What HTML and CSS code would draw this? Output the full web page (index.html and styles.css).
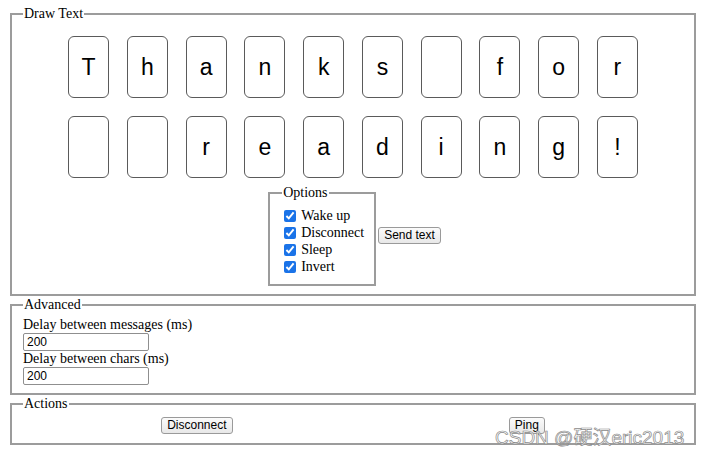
FILE: index.html
```html
<!DOCTYPE html>
<html lang="en">
<head>
    <meta charset="UTF-8">
    <meta name="viewport" content="width=device-width, initial-scale=1.0">
    <title>Draw Text</title>
    <link rel="stylesheet" href="styles.css">
</head>
<body>
    <fieldset class="panel">
        <legend>Draw Text</legend>
        <div class="cards">
            <div class="card">T</div>
            <div class="card">h</div>
            <div class="card">a</div>
            <div class="card">n</div>
            <div class="card">k</div>
            <div class="card">s</div>
            <div class="card"></div>
            <div class="card">f</div>
            <div class="card">o</div>
            <div class="card">r</div>
        </div>
        <div class="cards">
            <div class="card"></div>
            <div class="card"></div>
            <div class="card">r</div>
            <div class="card">e</div>
            <div class="card">a</div>
            <div class="card">d</div>
            <div class="card">i</div>
            <div class="card">n</div>
            <div class="card">g</div>
            <div class="card">!</div>
        </div>
        <div class="send-section">
            <fieldset class="options">
                <legend>Options</legend>
                <label class="option"><input type="checkbox" checked> Wake up</label>
                <label class="option"><input type="checkbox" checked> Disconnect</label>
                <label class="option"><input type="checkbox" checked> Sleep</label>
                <label class="option"><input type="checkbox" checked> Invert</label>
            </fieldset>
            <button class="btn">Send text</button>
        </div>
    </fieldset>

    <fieldset class="panel">
        <legend>Advanced</legend>
        <label class="field-label" for="msgDelay">Delay between messages (ms)</label>
        <input class="field" type="text" id="msgDelay" value="200">
        <label class="field-label" for="charDelay">Delay between chars (ms)</label>
        <input class="field" type="text" id="charDelay" value="200">
    </fieldset>

    <fieldset class="panel">
        <legend>Actions</legend>
        <div class="actions">
            <button class="btn">Disconnect</button>
            <button class="btn">Ping</button>
        </div>
    </fieldset>

    <div class="watermark">CSDN @硬汉eric2013</div>
</body>
</html>
```

FILE: styles.css
```css
* {
    box-sizing: border-box;
}

body {
    margin: 6px 7px 0 10px;
    font-family: 'Liberation Serif', 'Times New Roman', serif;
    font-size: 14px;
    color: #000;
    background: #fff;
}

fieldset {
    border: 2px solid #9c9c9c;
    margin: 0;
}

legend {
    padding: 0 1px;
    line-height: 16px;
}

.panel {
    padding: 0 11px 8px;
    margin-bottom: 1px;
}

.panel:last-of-type {
    padding-bottom: 9px;
}

.cards {
    display: flex;
    justify-content: center;
    gap: 17.75px;
    margin-top: 14px;
}

.cards + .cards {
    margin-top: 18px;
}

.card {
    width: 41px;
    height: 62px;
    border: 1.5px solid #5a5a5a;
    border-radius: 6px;
    display: flex;
    align-items: center;
    justify-content: center;
    padding-top: 1px;
    font-family: 'Liberation Sans', Arial, sans-serif;
    font-size: 23px;
}

.send-section {
    display: flex;
    justify-content: center;
    align-items: center;
    gap: 2px;
    margin-top: 7px;
    padding-left: 3px;
}

.options {
    padding: 6px 10px 9px 12px;
}

.option {
    display: flex;
    align-items: center;
    height: 17px;
    white-space: nowrap;
}

.option input {
    width: 12px;
    height: 12px;
    margin: 0 5px 0 2px;
    accent-color: #1a73e8;
}

.btn {
    font-family: 'Liberation Sans', Arial, sans-serif;
    font-size: 12px;
    line-height: 13px;
    padding: 1px 5px;
    color: #000;
    background: linear-gradient(#fbfbfb, #e8e8e8);
    border: 1px solid #9a9a9a;
    border-radius: 3px;
}

.field-label {
    display: block;
    line-height: 16px;
}

.panel legend + .field-label {
    margin-top: 4px;
}

.field {
    display: block;
    width: 126px;
    height: 18px;
    padding: 1px 3px;
    border: 1px solid #8f8f8f;
    border-radius: 2px;
    font-family: 'Liberation Sans', Arial, sans-serif;
    font-size: 12px;
}

.actions {
    display: flex;
    justify-content: space-around;
    margin-top: 5px;
}

.watermark {
    position: absolute;
    left: 495px;
    top: 428px;
    font-family: 'Liberation Sans', 'Noto Sans CJK SC', sans-serif;
    font-size: 19px;
    line-height: 20px;
    color: rgba(255, 255, 255, 0.75);
    -webkit-text-stroke: 0.7px #8a8a8a;
    white-space: nowrap;
}
```
